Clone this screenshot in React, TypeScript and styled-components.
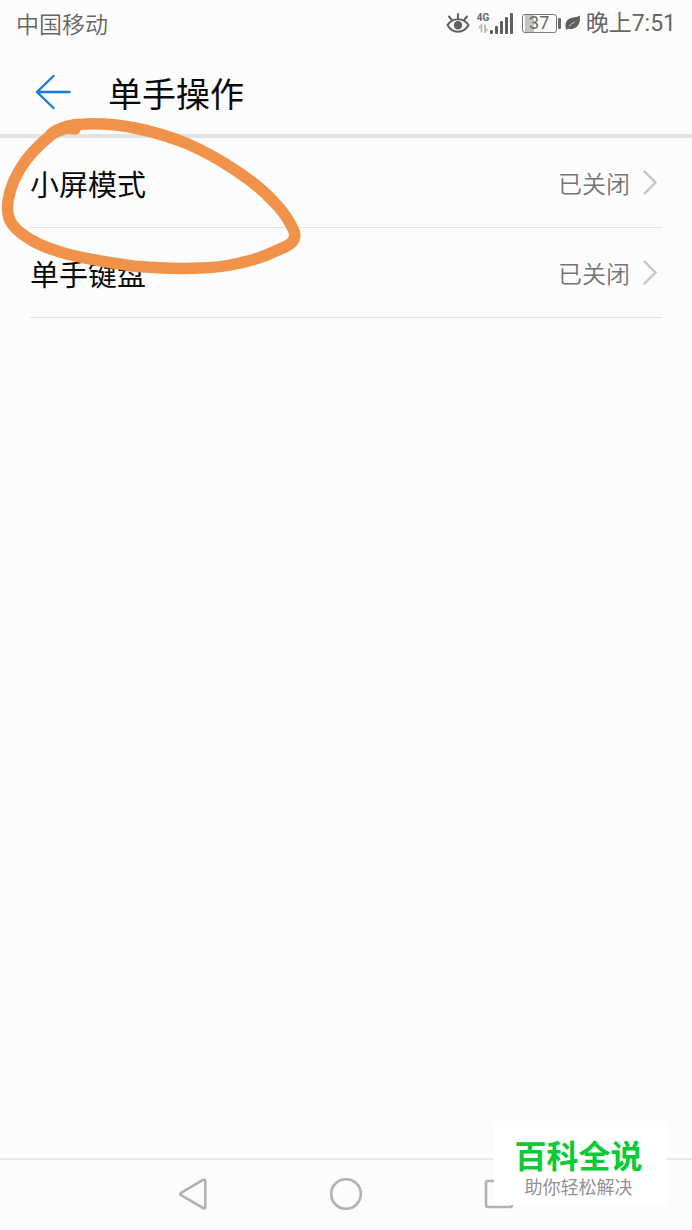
import React from 'react';
import styled, { createGlobalStyle } from 'styled-components';

const GlobalStyle = createGlobalStyle`
  * { box-sizing: border-box; }
  body {
    margin: 0;
    background: #fcfcfc;
    color: #0a0a0a;
    font-family: "Noto Sans CJK SC", sans-serif;
  }
  svg { display: block; flex: none; }
  button {
    border: 0;
    padding: 0;
    background: none;
    font: inherit;
    color: inherit;
    text-align: left;
    cursor: pointer;
  }
`;

const Screen = styled.div`
  position: relative;
  display: flex;
  flex-direction: column;
  min-height: 100vh;
`;

const StatusBar = styled.div`
  display: flex;
  align-items: center;
  justify-content: space-between;
  height: 46px;
  padding: 0 16px;
  font-size: 23px;
  line-height: 32px;
  font-weight: 350;
  color: #666;
`;

const StatusIcons = styled.div`
  display: flex;
  align-items: center;
`;

const Signal = styled.div`
  display: flex;
  align-items: flex-end;
  height: 22px;
  margin: 0 9px 0 7px;
`;

const Network = styled.div`
  display: flex;
  flex-direction: column;
  align-items: center;
  width: 13px;
  height: 22px;
  font: 700 10px/12px Roboto, sans-serif;
`;

const Battery = styled.div`
  display: flex;
  align-items: center;
  margin-right: 4px;
`;

const BatteryCell = styled.div`
  display: flex;
  align-items: center;
  justify-content: center;
  width: 35px;
  height: 19px;
  border: 1px solid #777;
  border-radius: 3px;
  background: linear-gradient(90deg, #c4c4c4 0 9px, transparent 9px) 2px 0 no-repeat;
  font-family: Roboto, sans-serif;
  font-size: 18px;
  line-height: 18px;
  font-weight: 400;
`;

const BatteryTip = styled.div`
  width: 3px;
  height: 11px;
  margin-left: 1px;
  border-radius: 1px;
  background: #6c6c6c;
`;

const Time = styled.time`
  margin-left: 5px;
  padding-top: 2px;
  font-family: Roboto, "Noto Sans CJK SC", sans-serif;
  font-weight: 400;
`;

const Header = styled.header`
  display: flex;
  align-items: center;
  gap: 36px;
  height: 92px;
  padding: 6px 34px 0;
  border-bottom: 4px solid #e2e2e2;
`;

const Title = styled.h1`
  margin: 0;
  font-size: 34px;
  line-height: 48px;
  font-weight: 400;
`;

const Settings = styled.main`
  flex: 1;
  padding: 0 30px;
`;

const SettingRow = styled.button`
  display: flex;
  align-items: center;
  width: 100%;
  height: 90px;
  border-bottom: 1px solid #e2e2e2;
`;

const SettingLabel = styled.span`
  flex: 1;
  font-size: 29px;
  line-height: 40px;
`;

const SettingValue = styled.span`
  margin-right: 12px;
  font-size: 24px;
  line-height: 32px;
  font-weight: 350;
  color: #747474;
`;

const Navigation = styled.nav`
  display: flex;
  align-items: center;
  justify-content: center;
  gap: 120px;
  height: 72px;
  padding-bottom: 2px;
  border-top: 2px solid #e9e9e9;
`;

const NavButton = styled.button`
  width: 32px;
  height: 32px;
`;

const Annotation = styled.svg`
  position: absolute;
  top: 110px;
  left: 0;
  pointer-events: none;
`;

const Watermark = styled.aside`
  position: absolute;
  right: 25px;
  bottom: 25px;
  display: flex;
  flex-direction: column;
  align-items: center;
  width: 173px;
  height: 84px;
  padding: 10px 4px 0 0;
  background: #fff;
`;

const Brand = styled.strong`
  font-size: 32px;
  line-height: 46px;
  font-weight: 700;
  color: #08cb35;
`;

const Slogan = styled.span`
  font-size: 18px;
  line-height: 18px;
  font-weight: 400;
  color: #929292;
`;

const EyeIcon = () => (
  <svg width="24" height="22" viewBox="0 0 24 22" fill="none" stroke="#606060" strokeWidth="2" strokeLinecap="round" aria-hidden="true">
    <path d="M1.5 13C4 9.3 7.5 7.3 12 7.3S20 9.3 22.5 13C20 17.5 16.5 19.7 12 19.7S4 17.5 1.5 13Z" strokeLinejoin="round" />
    <circle cx="12" cy="13.3" r="4.2" fill="#606060" stroke="none" />
    <path d="M12 2v4M3 4.5l2.5 3M21 4.5l-2.5 3" />
  </svg>
);

const DataIcon = () => (
  <svg width="11" height="9" viewBox="0 0 11 9" fill="none" stroke="#c0c0c0" strokeWidth="2" aria-hidden="true">
    <path d="M3.5 8.5V1L1 4M7 0.5V8L9.5 5" />
  </svg>
);

const BarsIcon = () => (
  <svg width="23" height="22" viewBox="0 0 23 22" fill="#606060" aria-hidden="true">
    <rect x="0" y="18" width="3" height="4" rx="1" />
    <rect x="5" y="14" width="3" height="8" rx="1" />
    <rect x="10" y="9" width="3" height="13" rx="1" />
    <rect x="15" y="5" width="3" height="17" rx="1" />
    <rect x="20" y="1" width="3" height="21" rx="1" />
  </svg>
);

const LeafIcon = () => (
  <svg width="16" height="16" viewBox="0 0 16 16" aria-hidden="true">
    <path d="M1 14C-.5 8 1.5 4 7 2.7C10 2 12.5 2 14.8.5C16 7 13 13.5 7 14C5.3 14.2 4.3 13.4 3 13.8L1.5 15Z" fill="#606060" />
    <path d="M4 11.5C5.5 9.5 7.5 8 10 7" fill="none" stroke="#fcfcfc" strokeWidth="0.7" />
  </svg>
);

const BackArrow = () => (
  <svg width="38" height="36" viewBox="0 0 38 36" fill="none" stroke="#167bdc" strokeWidth="2.4" strokeLinecap="round" strokeLinejoin="round" aria-hidden="true">
    <path d="M19.5 1L3 17L19.5 33M3 17H35.5" />
  </svg>
);

const Chevron = () => (
  <svg width="20" height="26" viewBox="0 0 20 26" fill="none" stroke="#c5c5c5" strokeWidth="2.4" strokeLinecap="round" strokeLinejoin="miter" aria-hidden="true">
    <path d="M2.5 1.5L13.5 12.5L2.5 23.5" />
  </svg>
);

const settings = [
  { label: '小屏模式', value: '已关闭' },
  { label: '单手键盘', value: '已关闭' },
];

const navItems = [
  { label: '返回', shape: <path d="M3.5 14.6L25 1.9Q27.3 .7 27.3 3.2V28.8Q27.3 31.3 25 30L3.5 17.4Q.8 16 3.5 14.6Z" /> },
  { label: '主屏幕', shape: <circle cx="16" cy="16" r="14.8" /> },
  { label: '最近任务', shape: <rect x="4" y="3" width="26" height="26" rx="2" /> },
];

export default function App() {
  return (
    <Screen>
      <GlobalStyle />
      <StatusBar>
        <span>中国移动</span>
        <StatusIcons>
          <EyeIcon />
          <Signal>
            <Network>4G<DataIcon /></Network>
            <BarsIcon />
          </Signal>
          <Battery>
            <BatteryCell>37</BatteryCell>
            <BatteryTip />
          </Battery>
          <LeafIcon />
          <Time dateTime="19:51">晚上7:51</Time>
        </StatusIcons>
      </StatusBar>
      <Header>
        <button type="button" aria-label="返回上一页"><BackArrow /></button>
        <Title>单手操作</Title>
      </Header>
      <Settings>
        {settings.map(({ label, value }) => (
          <SettingRow type="button" key={label}>
            <SettingLabel>{label}</SettingLabel>
            <SettingValue>{value}</SettingValue>
            <Chevron />
          </SettingRow>
        ))}
      </Settings>
      <Navigation>
        {navItems.map(({ label, shape }) => (
          <NavButton type="button" key={label} aria-label={label}>
            <svg width="32" height="32" viewBox="0 0 32 32" fill="none" stroke="#b2b2b2" strokeWidth="2.6" aria-hidden="true">{shape}</svg>
          </NavButton>
        ))}
      </Navigation>
      <Annotation width="310" height="170" viewBox="0 0 310 170" fill="none" stroke="#f0924a" strokeWidth="11.5" strokeLinecap="round" strokeLinejoin="round" aria-hidden="true">
        <path d="M51 24C60 17 73 14 85 14C105 13 120 15 135 18C155 22 171 27 188 34C204 41 220 50 235 60C249 69 263 80 274 92C283 101 290 112 294 121C297 130 291 135 280 139C268 145 255 150 240 153C227 156 213 158 200 158C178 159 155 158 133 156C110 153 87 149 67 144C53 140 43 137 33 131C24 126 17 121 12 114C7 107 7 99 8 91C10 77 16 64 26 50C34 40 45 29 58 20" />
        <path d="M55 22L67 18L75 19" />
      </Annotation>
      <Watermark>
        <Brand>百科全说</Brand>
        <Slogan>助你轻松解决</Slogan>
      </Watermark>
    </Screen>
  );
}
